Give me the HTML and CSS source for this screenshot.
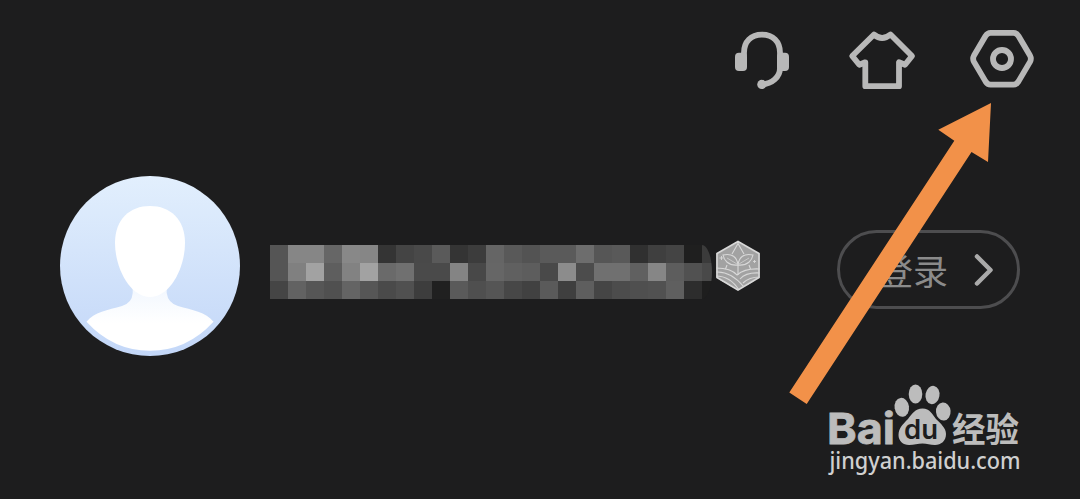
FILE: index.html
```html
<!DOCTYPE html>
<html lang="zh-CN">
<head>
    <meta charset="UTF-8">
    <meta name="viewport" content="width=device-width, initial-scale=1.0">
    <title>登录</title>
    <link rel="stylesheet" href="styles.css">
</head>
<body>

    <div class="page">
        <div class="toolbar">
            <svg class="icon" width="60" height="64" viewBox="0 0 60 64">
                <path class="line" d="M12 27V24.7C12 13.5 19 6.7 30 6.7S48 13.5 48 24.7V40C48 49 40 56 30 56.3" />
                <rect class="solid" x="3" y="24.7" width="12" height="18.3" rx="4" />
                <rect class="solid" x="45" y="24.7" width="12" height="18.3" rx="4" />
                <circle class="solid" cx="29.8" cy="56.4" r="4.6" />
            </svg>
            <svg class="icon" width="72" height="64" viewBox="0 0 72 64">
                <path class="line" d="M28 6.5Q36 13.5 44.5 6.5L66 28 59 36.8 53 34.3V58.2H19.3V34.3L13.3 36.8 6.2 28Z" />
            </svg>
            <svg class="icon" width="68" height="64" viewBox="0 0 68 64">
                <path class="line" d="M22.5 4.8H45.5Q48.5 4.8 50.5 8L62 27.5Q63.7 30.7 62 33.9L50.5 53.4Q48.5 56.6 45.5 56.6H22.5Q19.5 56.6 17.5 53.4L6 33.9Q4.3 30.7 6 27.5L17.5 8Q19.5 4.8 22.5 4.8Z" />
                <circle class="line" cx="34" cy="31" r="9" />
            </svg>
        </div>

        <div class="profile">
            <svg class="avatar" width="180" height="180" viewBox="0 0 180 180">
                <defs>
                    <linearGradient id="sky" x1="0" y1="0" x2="0" y2="1">
                        <stop offset="0" stop-color="#e2effd" />
                        <stop offset="1" stop-color="#c3d7f8" />
                    </linearGradient>
                    <linearGradient id="neck" x1="0" y1="0" x2="0" y2="1">
                        <stop offset="0" stop-color="#f0f6fe" />
                        <stop offset="0.6" stop-color="#fff" />
                    </linearGradient>
                </defs>
                <circle cx="90" cy="90" r="90" fill="url(#sky)" />
                <path fill="url(#neck)" d="M72.7 106V117Q72 127 62 130C48 134 34 136 26.5 145.7Q53 174.7 90 174.7T153.5 145.7C146 136 132 134 118 130Q108 127 106.7 117V106Z" />
                <path fill="#fff" d="M90 30C110 30 125 43 125 67C125 92 110 121 90 121S55 92 55 67C55 43 70 30 90 30Z" />
            </svg>

            <div class="mosaic" id="mosaic"></div>

            <svg class="badge" width="46" height="52" viewBox="0 0 46 52">
                <defs>
                    <clipPath id="hex"><path d="M23 1 44.5 13V38L23 50.5 1.5 38V13Z" /></clipPath>
                </defs>
                <path fill="#a2a2a2" d="M23 2 43.5 13.5V37.5L23 49.5 2.5 37.5V13.5Z" />
                <g clip-path="url(#hex)" fill="none" stroke="#d8d8d8" stroke-width="1.1">
                    <path d="M17 14 23 3.5 29 14M12 25 10.5 29M34 25 35.5 29" />
                    <path d="M23 35V25M23 25C13 26 9 20 8 15 17 13 22 17 23 25ZM23 25C24 17 29 13 38 15 37 20 33 26 23 25Z" />
                    <path d="M12 18 22 24M34 18 24 24" stroke-width=".7" />
                    <path d="M1 28Q16 28 22 35Q30 28 45 29M1 32Q16 31 29 47M1 36Q15 36 24 50M1 40Q12 41 17 48M45 33Q31 32 25 39M45 37Q34 37 28 43M45 41Q36 41 31 47" />
                    <path d="M6.5 16V20M4.5 18H8.5M39.500 20V23M38 21.5H41" stroke-width=".9" />
                </g>
                <path fill="none" stroke="#d8d8d8" stroke-width="1.8" stroke-linejoin="round" d="M23 1.500 44 13.5V37.5L23 50 2 37.5V13.5Z" />
            </svg>

            <a class="login">
                <span>登录</span>
                <svg width="20" height="34" viewBox="0 0 20 34">
                    <path d="M3 3.5 16.5 17 3 30.5" />
                </svg>
            </a>
        </div>

        <svg class="arrow" width="204" height="303" viewBox="0 0 204 303">
            <path d="M203 0 150.3 26.7 166.3 37.7 1.3 289.5 18.7 301 183.5 49 200 59Z" />
        </svg>

        <svg class="watermark" width="210" height="124" viewBox="820 375 210 124">
            <text class="latin" x="827" y="444" textLength="68" lengthAdjust="spacingAndGlyphs">Bai</text>
            <ellipse cx="901.8" cy="407.3" rx="7.2" ry="9.5" transform="rotate(-8 901.8 407.3)" />
            <ellipse cx="915.5" cy="394" rx="6.8" ry="9.5" />
            <ellipse cx="932.5" cy="395" rx="7" ry="9.2" transform="rotate(10 932.5 395)" />
            <ellipse cx="943.3" cy="411.5" rx="7.3" ry="9" transform="rotate(-5 943.3 411.5)" />
            <path d="M922.5 408.5C930 408.5 932 414 936 419C941 424 946 428 946 434C946 441 941 445 935 445C930 445 927 443.5 922.5 443.5S914 445 909 445C903 445 898.5 441 898.5 435C898.5 428 903 424 908 419C912 414 915 408.5 922.5 408.5Z" />
            <text class="du" x="904" y="438.5" textLength="34" lengthAdjust="spacingAndGlyphs">du</text>
            <text class="hanzi" x="952" y="441.5" textLength="67" lengthAdjust="spacingAndGlyphs">经验</text>
            <text class="url" x="829.5" y="469" textLength="191" lengthAdjust="spacingAndGlyphs">jingyan.baidu.com</text>
        </svg>
    </div>

    <script>
        // Grey level of every block, row by row
        const rows = [
            '55 86 86 66 88 86 34 44 49 5a 34 3c 65 59 53 5a 5a 6d 56 59 30 3f 44 1f 3b',
            '55 80 a2 5e 82 a2 6a 70 4a 4a 84 48 66 60 5d 49 8c 4c 70 70 60 86 5d 51 49',
            '45 62 56 50 64 56 4a 50 3d 20 5a 4f 55 47 41 5a 3f 5e 45 4c 4f 51 5f 2d 1e'
        ];
        const mosaic = document.getElementById('mosaic');

        rows.join(' ').split(' ').forEach(level => {
            const block = document.createElement('i');
            block.style.backgroundColor = '#' + level + level + level;
            mosaic.appendChild(block);
        });
    </script>

</body>
</html>
```
FILE: styles.css
```css
body {
    margin: 0;
    background-color: #1d1d1e;
    font-family: "Noto Sans", "Noto Sans CJK SC", sans-serif;
}
.page {
    position: relative; /* For the arrow and the watermark */
    width: 1080px;
    height: 499px;
    overflow: hidden;
}
.toolbar {
    display: flex;
    justify-content: flex-end;
    padding: 28px 44px 0 0;
}
.icon {
    display: block;
    margin-left: 54px;
}
.icon + .icon + .icon {
    margin-left: 50px;
}
.line {
    fill: none;
    stroke: #b8b8b8;
    stroke-width: 5.8;
    stroke-linejoin: round;
    stroke-linecap: round;
}
.solid {
    fill: #b8b8b8;
}
.profile {
    display: flex;
    align-items: center;
    height: 180px;
    padding: 84px 60px 0;
}
.avatar {
    flex: none;
}
.mosaic {
    display: grid;
    grid-template-columns: repeat(25, 18px); /* Square blocks */
    grid-auto-rows: 18px;
    width: 442px;
    margin: 12px 0 0 30px;
    overflow: hidden;
    border-radius: 0 10px 10px 0 / 0 27px 27px 0; /* Rounded right end */
}
.badge {
    flex: none;
    margin-left: 3px;
}
.login {
    display: flex;
    align-items: center;
    box-sizing: border-box;
    width: 183px;
    height: 79px;
    margin: 7px 0 0 76px;
    padding-left: 38px;
    border: 3px solid #4d4d4f;
    border-radius: 40px;
    color: #8b8b8b;
    font-family: "Noto Sans CJK SC", sans-serif;
    font-size: 35px;
    line-height: 50px;
}
.login svg {
    margin-left: 26px;
}
.login path {
    fill: none;
    stroke: #aaa;
    stroke-width: 4.5;
    stroke-linecap: round;
    stroke-linejoin: round;
}
.arrow {
    position: absolute; /* Lies over the login button */
    left: 788px;
    top: 103px;
    fill: #f29149;
}
.watermark {
    position: absolute; /* Bottom right corner */
    left: 820px;
    top: 375px;
    fill: #bcbcbc;
}
.latin {
    font: 700 43px Inter, sans-serif;
    stroke: #bcbcbc;
    stroke-width: 0.8;
}
.du {
    font: 600 27px Inter, sans-serif;
    fill: #1d1d1e;
}
.hanzi {
    font: bold 34px "Noto Sans CJK SC", sans-serif;
}
.url {
    font: 500 23px "Noto Sans", sans-serif;
    fill: #d0d0d0;
}
```
